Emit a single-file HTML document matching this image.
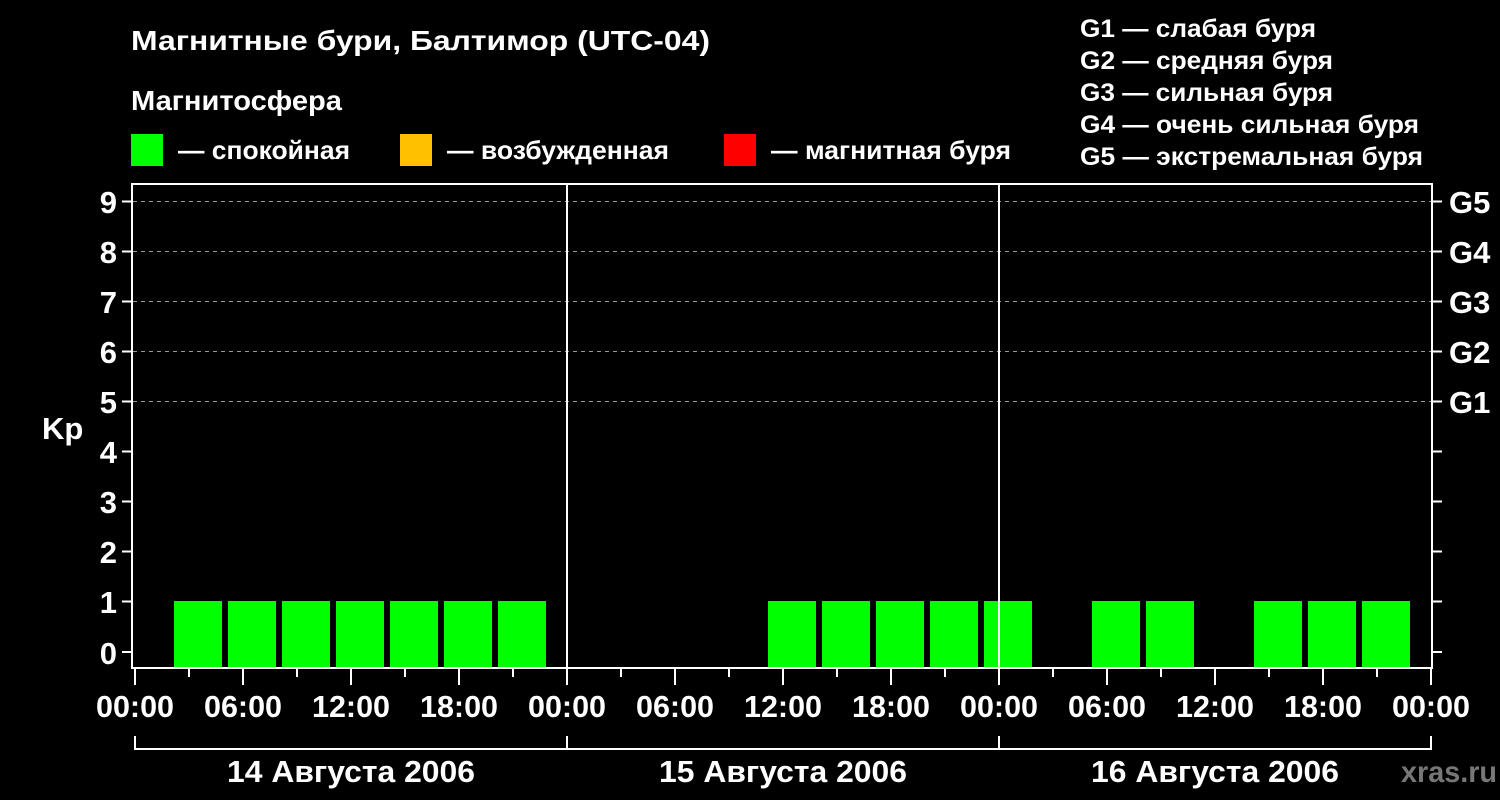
<!DOCTYPE html>
<html><head><meta charset="utf-8"><style>
html,body{margin:0;padding:0;background:#000;width:1500px;height:800px;overflow:hidden}
svg{display:block}
text{font-family:"Liberation Sans",Arial,sans-serif;font-weight:bold;fill:#fff}
</style></head><body>
<svg width="1500" height="800" viewBox="0 0 1500 800">
<rect width="1500" height="800" fill="#000"/>
<text x="131" y="50" font-size="28" textLength="579" lengthAdjust="spacingAndGlyphs">Магнитные бури, Балтимор (UTC-04)</text>
<text x="131" y="110" font-size="28" textLength="211" lengthAdjust="spacingAndGlyphs">Магнитосфера</text>
<rect x="131" y="134" width="32" height="32" fill="#00ff00"/>
<text x="178" y="159" font-size="26" textLength="172" lengthAdjust="spacingAndGlyphs">— спокойная</text>
<rect x="400" y="134" width="32" height="32" fill="#ffc000"/>
<text x="447" y="159" font-size="26" textLength="222" lengthAdjust="spacingAndGlyphs">— возбужденная</text>
<rect x="724" y="134" width="32" height="32" fill="#ff0000"/>
<text x="771" y="159" font-size="26" textLength="240" lengthAdjust="spacingAndGlyphs">— магнитная буря</text>
<g font-size="25">
<text x="1080" y="37" textLength="236" lengthAdjust="spacingAndGlyphs">G1 — слабая буря</text>
<text x="1080" y="69" textLength="253" lengthAdjust="spacingAndGlyphs">G2 — средняя буря</text>
<text x="1080" y="101" textLength="253" lengthAdjust="spacingAndGlyphs">G3 — сильная буря</text>
<text x="1080" y="133" textLength="339" lengthAdjust="spacingAndGlyphs">G4 — очень сильная буря</text>
<text x="1080" y="165" textLength="343" lengthAdjust="spacingAndGlyphs">G5 — экстремальная буря</text>
</g>
<g stroke="#999" stroke-width="1" stroke-dasharray="4,4">
<line x1="133" y1="201.5" x2="1431" y2="201.5"/>
<line x1="133" y1="251.5" x2="1431" y2="251.5"/>
<line x1="133" y1="301.5" x2="1431" y2="301.5"/>
<line x1="133" y1="351.5" x2="1431" y2="351.5"/>
<line x1="133" y1="401.5" x2="1431" y2="401.5"/>
</g>
<g fill="#00ff00">
<rect x="174" y="601" width="48" height="67"/>
<rect x="228" y="601" width="48" height="67"/>
<rect x="282" y="601" width="48" height="67"/>
<rect x="336" y="601" width="48" height="67"/>
<rect x="390" y="601" width="48" height="67"/>
<rect x="444" y="601" width="48" height="67"/>
<rect x="498" y="601" width="48" height="67"/>
<rect x="768" y="601" width="48" height="67"/>
<rect x="822" y="601" width="48" height="67"/>
<rect x="876" y="601" width="48" height="67"/>
<rect x="930" y="601" width="48" height="67"/>
<rect x="984" y="601" width="48" height="67"/>
<rect x="1092" y="601" width="48" height="67"/>
<rect x="1146" y="601" width="48" height="67"/>
<rect x="1254" y="601" width="48" height="67"/>
<rect x="1308" y="601" width="48" height="67"/>
<rect x="1362" y="601" width="48" height="67"/>
</g>
<g stroke="#fff" stroke-width="2" fill="none">
<rect x="132" y="184" width="1300" height="484"/>
<line x1="567" y1="184" x2="567" y2="668"/>
<line x1="999" y1="184" x2="999" y2="668"/>
<path d="M122 201.5H132M122 251.5H132M122 301.5H132M122 351.5H132M122 401.5H132M122 451.5H132M122 501.5H132M122 551.5H132M122 601.5H132M122 652H132"/>
<path d="M1432 201.5H1442M1432 251.5H1442M1432 301.5H1442M1432 351.5H1442M1432 401.5H1442M1432 451.5H1442M1432 501.5H1442M1432 551.5H1442M1432 601.5H1442M1432 652H1442"/>
<path d="M135 669V685M243 669V685M351 669V685M459 669V685M567 669V685M675 669V685M783 669V685M891 669V685M999 669V685M1107 669V685M1215 669V685M1323 669V685M1431 669V685"/>
<path d="M189 669V677M297 669V677M405 669V677M513 669V677M621 669V677M729 669V677M837 669V677M945 669V677M1053 669V677M1161 669V677M1269 669V677M1377 669V677"/>
<path d="M135 736V749H1431V736M567 736V749M999 736V749"/>
</g>
<g font-size="31" text-anchor="end">
<text x="117" y="213">9</text><text x="117" y="263">8</text><text x="117" y="313">7</text>
<text x="117" y="363">6</text><text x="117" y="413">5</text><text x="117" y="463">4</text>
<text x="117" y="513">3</text><text x="117" y="563">2</text><text x="117" y="613">1</text>
<text x="117" y="664">0</text>
</g>
<text x="42" y="439" font-size="31">Kp</text>
<g font-size="31">
<text x="1449" y="213">G5</text><text x="1449" y="263">G4</text><text x="1449" y="313">G3</text>
<text x="1449" y="363">G2</text><text x="1449" y="413">G1</text>
</g>
<g font-size="31" text-anchor="middle">
<text x="135" y="717" textLength="78" lengthAdjust="spacingAndGlyphs">00:00</text>
<text x="243" y="717" textLength="78" lengthAdjust="spacingAndGlyphs">06:00</text>
<text x="351" y="717" textLength="78" lengthAdjust="spacingAndGlyphs">12:00</text>
<text x="459" y="717" textLength="78" lengthAdjust="spacingAndGlyphs">18:00</text>
<text x="567" y="717" textLength="78" lengthAdjust="spacingAndGlyphs">00:00</text>
<text x="675" y="717" textLength="78" lengthAdjust="spacingAndGlyphs">06:00</text>
<text x="783" y="717" textLength="78" lengthAdjust="spacingAndGlyphs">12:00</text>
<text x="891" y="717" textLength="78" lengthAdjust="spacingAndGlyphs">18:00</text>
<text x="999" y="717" textLength="78" lengthAdjust="spacingAndGlyphs">00:00</text>
<text x="1107" y="717" textLength="78" lengthAdjust="spacingAndGlyphs">06:00</text>
<text x="1215" y="717" textLength="78" lengthAdjust="spacingAndGlyphs">12:00</text>
<text x="1323" y="717" textLength="78" lengthAdjust="spacingAndGlyphs">18:00</text>
<text x="1431" y="717" textLength="78" lengthAdjust="spacingAndGlyphs">00:00</text>
<text x="351" y="782" textLength="248" lengthAdjust="spacingAndGlyphs">14 Августа 2006</text>
<text x="783" y="782" textLength="248" lengthAdjust="spacingAndGlyphs">15 Августа 2006</text>
<text x="1215" y="782" textLength="248" lengthAdjust="spacingAndGlyphs">16 Августа 2006</text>
</g>
<text x="1497" y="782" font-size="30" text-anchor="end" style="fill:#777" textLength="96" lengthAdjust="spacingAndGlyphs">xras.ru</text>
</svg>
</body></html>
